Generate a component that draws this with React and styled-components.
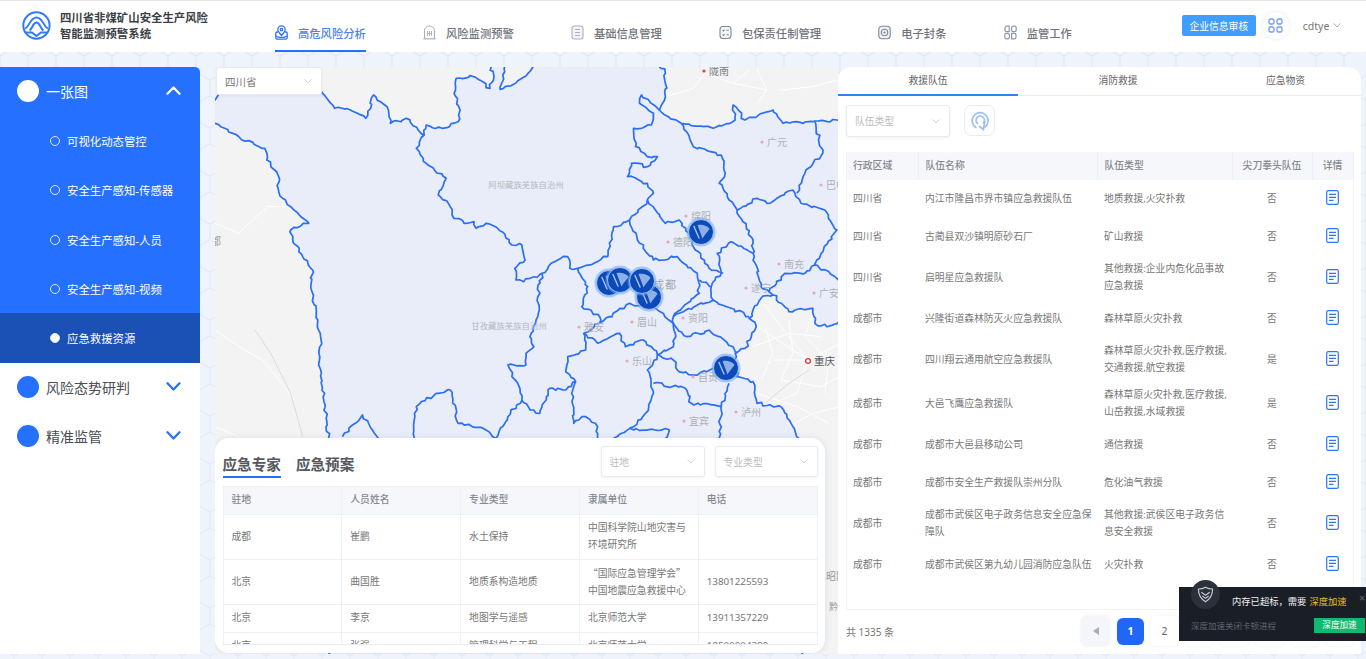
import React from "react"
import styled, { createGlobalStyle } from "styled-components"

const hexTile = encodeURIComponent(
  `<svg xmlns="http://www.w3.org/2000/svg" width="28" height="48"><path d="M14 0L28 8V24L14 32L0 24V8ZM14 32V48" fill="none" stroke="#dfe7f6" stroke-width="1"/></svg>`
)

const GlobalStyle = createGlobalStyle`
  * { box-sizing: border-box; }
  html, body { margin: 0; padding: 0; height: 100%; overflow: hidden; }
  body {
    font-family: "Noto Sans", "Noto Sans CJK SC", sans-serif;
    background-color: #eef3fc;
    background-image: url("data:image/svg+xml,${hexTile}");
  }
`

const Page = styled.div`
  width: 1366px;
  height: 659px;
  overflow: hidden;
`

/* ---------- header ---------- */
const Header = styled.header`
  height: 52px;
  background: #fff;
  border-top: 1px solid #e6e6e6;
  display: flex;
  padding-left: 22px;
`
const Brand = styled.div`
  display: flex;
  align-items: center;
  gap: 9px;
  width: 186px;
  padding-bottom: 2px;
`
const BrandTitle = styled.div`
  font-size: 11.4px;
  line-height: 16px;
  font-weight: 700;
  color: #3c3f45;
  white-space: nowrap;
`
const Nav = styled.nav`
  display: flex;
  gap: 57.2px;
  margin-left: 67px;
`
const NavItem = styled.div`
  display: flex;
  align-items: center;
  gap: 10px;
  height: 51px;
  padding-top: 14px;
  font-size: 11.3px;
  font-weight: 500;
  white-space: nowrap;
  color: ${({ $active }) => ($active ? "#4c7ff0" : "#6f747c")};
  border-bottom: 2px solid ${({ $active }) => ($active ? "#2570ff" : "transparent")};
`
const HeaderRight = styled.div`
  position: relative;
  display: flex;
  align-items: center;
  margin-left: 110px;
  padding-bottom: 2px;
`
const AuditButton = styled.button`
  width: 74px;
  height: 21px;
  padding: 0;
  border: 0;
  border-radius: 2px;
  background: #409eff;
  color: #fff;
  font: inherit;
  font-size: 9.8px;
`
const GridBadge = styled.div`
  width: 26px;
  height: 27px;
  margin-left: 7px;
  border-radius: 50%;
  background: #fff;
  box-shadow: 0 0 4px #e4e9f4;
  display: flex;
  align-items: center;
  justify-content: center;
`
const UserName = styled.span`
  margin-left: 14px;
  font-size: 10.5px;
  color: #777;
  display: flex;
  align-items: center;
  gap: 4px;
`

/* ---------- layout ---------- */
const Main = styled.main`
  display: grid;
  grid-template-columns: 200px 623px 523px;
  column-gap: 15px;
  height: 587px;
  margin-top: 15px;
  & > :nth-child(3) { margin-left: -15px; width: 523px; }
`

/* ---------- sidebar ---------- */
const Sidebar = styled.aside`
  background: #fff;
  border-top-right-radius: 5px;
  overflow: hidden;
`
const BlueGroup = styled.div`
  background: #2570ff;
`
const MenuHead = styled.div`
  height: 49.3px;
  display: flex;
  align-items: center;
  padding: 0 19px 1.5px 17px;
  font-size: 14px;
  color: ${({ $open }) => ($open ? "#fff" : "#4a4d52")};
`
const MenuDot = styled.span`
  width: 22px;
  height: 22px;
  border-radius: 50%;
  background: ${({ $open }) => ($open ? "#fff" : "#2570ff")};
  margin-right: 7px;
`
const MenuLabel = styled.span`
  flex: 1;
`
const SubItem = styled.div`
  height: 49.3px;
  display: flex;
  align-items: center;
  padding-left: 50px;
  font-size: 11.4px;
  color: #fff;
  background: ${({ $active }) => ($active ? "#1b50b4" : "transparent")};
`
const SubDot = styled.span`
  width: 10px;
  height: 10px;
  margin-right: 7px;
  border-radius: 50%;
  border: 1px solid #dfe9ff;
  background: ${({ $active }) => ($active ? "#fff" : "transparent")};
`

/* ---------- map ---------- */
const MapPane = styled.section`
  position: relative;
  background: #f3f3f3;
  overflow: hidden;
`
const MapSvg = styled.svg`
  display: block;
  width: 623px;
  height: 587px;
`
const Select = styled.div`
  display: flex;
  align-items: center;
  justify-content: space-between;
  width: ${({ $w }) => $w}px;
  height: ${({ $h }) => $h}px;
  padding: 0 9px 0 8px;
  background: #fff;
  border: 1px solid #e8ebf2;
  border-radius: 3px;
  box-shadow: 0 1px 3px rgba(60, 80, 130, 0.08);
  font-size: ${({ $dark }) => ($dark ? "10.5px" : "9.8px")};
  color: ${({ $dark }) => ($dark ? "#777" : "#bdbdbd")};
`
const MapSelectSlot = styled.div`
  position: absolute;
  left: 1px;
  top: 0;
`
const ExpertCard = styled.div`
  position: absolute;
  left: 0;
  top: 371px;
  width: 610px;
  height: 215px;
  padding: 8px 7.5px 0;
  background: #fff;
  border-radius: 14px;
  box-shadow: 0 0 6px rgba(60, 80, 130, 0.12);
`
const CardTop = styled.div`
  display: flex;
  justify-content: space-between;
  height: 40px;
`
const CardTabs = styled.div`
  display: flex;
  gap: 15px;
  padding-top: 7px;
`
const CardTab = styled.div`
  height: 25px;
  font-size: 14.6px;
  line-height: 22px;
  font-weight: 700;
  color: #55585e;
  border-bottom: ${({ $active }) => ($active ? "2.5px solid #2570ff" : "0")};
`
const CardSelects = styled.div`
  display: flex;
  gap: 10px;
`
const ExpertScroll = styled.div`
  height: 159px;
  overflow: hidden;
  border-bottom: 1px solid #e9ecf3;
`
const Table = styled.table`
  width: 100%;
  table-layout: fixed;
  border-collapse: collapse;
  font-size: 9.8px;
  line-height: 16.6px;
  color: #777;
`
const Th = styled.th`
  height: ${({ $h }) => $h}px;
  padding: 0 ${({ $pad }) => $pad}px;
  background: #f5f7fb;
  font-weight: 500;
  color: #85888e;
  white-space: nowrap;
  text-align: ${({ $center }) => ($center ? "center" : "left")};
  border: ${({ $lined }) => ($lined ? "1px solid #edf0f6" : "0")};
  border-right: 1px solid #edf0f6;
`
const Td = styled.td`
  height: ${({ $h }) => $h}px;
  padding: 0 ${({ $pad }) => $pad}px;
  text-align: ${({ $center }) => ($center ? "center" : "left")};
  white-space: pre;
  border: ${({ $lined }) => ($lined ? "1px solid #edf0f6" : "0")};
`
const CjkText = styled.span`
  font-family: "Noto Sans CJK SC", sans-serif;
`

/* ---------- right panel ---------- */
const TeamPanel = styled.section`
  background: #fff;
  border-radius: 13px 13px 0 0;
  height: 587px;
  padding: 0 7px 0 8px;
  position: relative;
`
const Tabs = styled.div`
  display: grid;
  grid-template-columns: 180px 200px 135px;
  margin: 0 -7px 0 -8px;
  border-bottom: 1px solid #e9edf5;
  height: 29px;
`
const Tab = styled.div`
  text-align: center;
  font-size: 9.8px;
  line-height: 28px;
  color: #666;
  height: 29px;
  border-bottom: ${({ $active }) => ($active ? "2px solid #2f83f5" : "0")};
`
const Filters = styled.div`
  display: flex;
  gap: 14px;
  margin: 9px 0 15px;
`
const IconButton = styled.button`
  width: 31px;
  height: 31px;
  padding: 0;
  border: 1px solid #e8ebf2;
  border-radius: 7px;
  background: #fff;
  display: flex;
  align-items: center;
  justify-content: center;
`
const TeamBox = styled.div`
  width: 508px;
  height: 458px;
  border: 1px solid #f1f3f8;
  border-top: 0;
`
const DetailIcon = styled.svg`
  display: block;
  margin: 0 auto 4px;
`
const Footer = styled.div`
  display: flex;
  align-items: center;
  margin-top: 6px;
  font-size: 10px;
  color: #777;
`
const Total = styled.span`
  flex: none;
  width: 235px;
  white-space: nowrap;
`
const Pager = styled.div`
  display: flex;
  align-items: center;
  gap: 6px;
`
const PageBtn = styled.div`
  flex: none;
  width: ${({ $active }) => ($active ? 27 : 29)}px;
  height: ${({ $active }) => ($active ? 27 : 30)}px;
  margin-left: ${({ $active }) => ($active ? 1 : 0)}px;
  border-radius: 6px;
  display: flex;
  align-items: center;
  justify-content: center;
  font-size: 10.5px;
  font-weight: ${({ $active }) => ($active ? 700 : 400)};
  color: ${({ $active }) => ($active ? "#fff" : "#666")};
  background: ${({ $active, $muted }) => ($active ? "#2167f5" : $muted ? "#f4f6fa" : "#fff")};
  box-shadow: 0 0 3px rgba(60, 80, 130, 0.1);
`
const PrevArrow = styled.span`
  width: 0;
  height: 0;
  border-style: solid;
  border-width: 4.5px 6px 4.5px 0;
  border-color: transparent #a9adb5 transparent transparent;
`

/* ---------- toast ---------- */
const Toast = styled.div`
  position: fixed;
  left: 1179px;
  top: 587px;
  width: 187px;
  height: 54px;
  background: #1a1e27;
  font-size: 9.3px;
`
const ToastBadge = styled.div`
  position: absolute;
  left: 12px;
  top: -7px;
  width: 29px;
  height: 29px;
  border-radius: 50%;
  background: #2b303b;
  display: flex;
  align-items: center;
  justify-content: center;
`
const ToastTitle = styled.div`
  position: absolute;
  left: 53px;
  top: 7px;
  color: #f0f0f0;
  white-space: nowrap;
`
const ToastLink = styled.span`
  color: #e8c21e;
  margin-left: 3px;
`
const ToastNote = styled.div`
  position: absolute;
  left: 12px;
  top: 32px;
  font-size: 8.5px;
  color: #5f6570;
  white-space: nowrap;
`
const ToastAction = styled.div`
  position: absolute;
  left: 135px;
  top: 31px;
  width: 51px;
  height: 15px;
  background: #0fb96f;
  color: #fff;
  font-size: 8.6px;
  line-height: 15px;
  text-align: center;
`
const ToastClose = styled.span`
  position: absolute;
  left: 180px;
  top: 3px;
  color: #666b75;
  font-size: 11px;
`

/* ---------- data ---------- */
const expertRows = [
  { h: 45, c: ["成都", "崔鹏", "水土保持", "中国科学院山地灾害与\n环境研究所", ""] },
  { h: 45, c: ["北京", "曲国胜", "地质系构造地质", <><CjkText>“国际应急管理学会”</CjkText>{"\n"}中国地震应急救援中心</>, "13801225593"] },
  { h: 28, c: ["北京", "李京", "地图学与遥感", "北京师范大学", "13911357229"] },
  { h: 28, c: ["北京", "张强", "管理科学与工程", "北京师范大学", "18500004399"] },
]

const teamRows = [
  { h: 38, c: ["四川省", "内江市隆昌市界市镇应急救援队伍", "地质救援,火灾扑救", "否"] },
  { h: 38, c: ["四川省", "古蔺县双沙镇明原砂石厂", "矿山救援", "否"] },
  { h: 44, c: ["四川省", "启明星应急救援队", "其他救援:企业内危化品事故\n应急救援", "否"] },
  { h: 38, c: ["成都市", "兴隆街道森林防灭火应急救援队", "森林草原火灾扑救", "否"] },
  { h: 44, c: ["成都市", "四川翔云通用航空应急救援队", "森林草原火灾扑救,医疗救援,\n交通救援,航空救援", "是"] },
  { h: 44, c: ["成都市", "大邑飞鹰应急救援队", "森林草原火灾扑救,医疗救援,\n山岳救援,水域救援", "是"] },
  { h: 38, c: ["成都市", "成都市大邑县移动公司", "通信救援", "否"] },
  { h: 38, c: ["成都市", "成都市安全生产救援队崇州分队", "危化油气救援", "否"] },
  { h: 44, c: ["成都市", "成都市武侯区电子政务信息安全应急保\n障队", "其他救援:武侯区电子政务信\n息安全救援", "否"] },
  { h: 38, c: ["成都市", "成都市武侯区第九幼儿园消防应急队伍", "火灾扑救", "否"] },
]

const subMenu = ["可视化动态管控", "安全生产感知-传感器", "安全生产感知-人员", "安全生产感知-视频", "应急救援资源"]

/* ---------- map geometry: points taken off the picture, x/y in a 2.509 x 3 grid ---------- */
const OUTLINE = [
  [285, 1800], [285, 1135], [262, 900], [265, 830], [258, 780], [240, 680], [245, 630], [220, 590], [195, 540], [190, 510], [215, 498], [235, 490],
  [190, 440], [160, 395], [158, 345], [130, 300], [125, 265], [60, 230], [0, 190], [-20, 175], [-20, 125], [0, 120], [8, 105], [15, 85], [262, 85], [270, 100],
  [300, 145], [340, 150], [378, 175], [398, 105], [435, 150], [440, 190], [480, 175], [525, 225], [530, 195], [570, 205], [610, 185], [615, 150],
  [600, 100], [605, 55], [650, 50], [690, 85], [700, 50], [688, 5], [728, 5], [722, 45], [715, 88], [770, 55], [808, 5], [1110, 5], [1130, 40],
  [1130, 110], [1115, 150], [1170, 190], [1250, 205], [1305, 180], [1300, 135], [1330, 180], [1400, 150], [1425, 190], [1500, 185], [1560, 180],
  [1620, 180], [1620, 760], [1535, 800], [1505, 790], [1500, 745], [1440, 755], [1400, 705], [1370, 715], [1340, 775], [1358, 800], [1330, 865],
  [1305, 880], [1310, 950], [1350, 965], [1360, 1030], [1420, 1040], [1450, 1100], [1465, 1135], [1470, 1800],
]

const BORDERS = [
  [[525, 225], [505, 265], [530, 310], [580, 355], [560, 405], [590, 440], [595, 465], [625, 490], [650, 485], [655, 505], [680, 490], [720, 515], [745, 555], [770, 555], [778, 600], [752, 625], [755, 660], [775, 665], [820, 640], [860, 600], [885, 590], [890, 625], [910, 625], [985, 590], [1000, 500], [1040, 480], [1085, 420], [1100, 400], [1085, 370], [1035, 350], [1045, 310], [1085, 320], [1110, 290], [1085, 290], [1055, 260], [1050, 205], [1095, 195], [1100, 160], [1065, 130], [1070, 105], [1115, 150]],
  [[820, 640], [810, 710], [810, 770], [790, 830], [800, 860], [780, 880], [780, 915], [735, 915], [745, 950], [765, 985], [770, 1020], [790, 1050], [815, 1060], [840, 985], [880, 990], [905, 965]],
  [[770, 1020], [735, 1070], [705, 1135]],
  [[500, 1135], [505, 1040], [555, 1000], [590, 990], [610, 1090], [680, 1110], [705, 1135]],
  [[320, 1130], [345, 1095], [370, 1065], [400, 1120], [410, 1140]],
  [[910, 625], [935, 680], [920, 740], [965, 770], [965, 790], [925, 820], [930, 870], [885, 890], [880, 935], [905, 965], [895, 1000], [900, 1090], [930, 1070], [960, 1100], [960, 1135]],
  [[965, 790], [1040, 730], [1100, 740], [1150, 790], [1155, 820], [1150, 860], [1110, 885]],
  [[925, 820], [960, 850], [1015, 820], [1030, 860], [1075, 840], [1110, 885], [1150, 900], [1160, 930], [1200, 945], [1250, 925], [1310, 950]],
  [[1110, 885], [1085, 930], [1100, 1000], [1080, 1060], [1050, 1100], [1000, 1135]],
  [[1100, 970], [1180, 985], [1195, 1030], [1270, 1040], [1290, 970]],
  [[1270, 1040], [1265, 1135]],
  [[1040, 1105], [1140, 1110], [1130, 1135]],
  [[1040, 480], [1060, 540], [1100, 600], [1160, 590], [1210, 640], [1215, 700], [1150, 770], [1150, 790], [1185, 830], [1240, 810], [1300, 860], [1310, 880]],
  [[1150, 770], [1210, 735], [1250, 720], [1340, 770]],
  [[1215, 660], [1245, 680], [1270, 640], [1260, 580], [1295, 545], [1350, 580], [1370, 680], [1390, 695], [1430, 640], [1480, 640], [1505, 615], [1560, 655], [1575, 680]],
  [[1245, 680], [1250, 720]],
  [[1085, 420], [1130, 490], [1165, 480], [1190, 520], [1205, 570], [1240, 625], [1275, 640]],
  [[1170, 190], [1200, 260], [1270, 285], [1280, 340], [1265, 370], [1290, 420], [1310, 450], [1350, 540], [1350, 580]],
  [[1310, 450], [1360, 415], [1385, 430], [1450, 390], [1470, 430], [1530, 450], [1560, 510], [1510, 600], [1505, 615]],
  [[1505, 185], [1525, 280], [1480, 340], [1460, 400]],
  [[1390, 695], [1400, 705]],
]

const ROADS = [
  [[1230, 40], [1200, 85], [1130, 110]], [[1230, 40], [1300, 70], [1340, 30]], [[1300, 70], [1385, 90], [1360, 130]], [[1360, 30], [1385, 90]],
  [[1420, 90], [1500, 80], [1560, 60]], [[1370, 720], [1420, 800], [1488, 900]], [[1360, 800], [1488, 900], [1568, 850]], [[1400, 900], [1488, 900]],
  [[1488, 900], [1460, 1000], [1400, 1030]], [[1350, 860], [1440, 820], [1520, 830]], [[1420, 960], [1520, 980], [1568, 950]], [[1440, 780], [1450, 880], [1420, 960]],
  [[1380, 800], [1400, 880], [1370, 960]], [[1500, 760], [1480, 830], [1540, 900], [1530, 1000]], [[1360, 1000], [1460, 1040], [1540, 1090]], [[1440, 1100], [1500, 1060], [1568, 1040]],
  [[0, 490], [60, 520], [130, 440], [190, 440]], [[0, 810], [60, 860], [120, 900], [200, 1020]], [[0, 1100], [60, 1130]],
]
const RIVERS = [[[100, 810], [140, 880], [190, 1000], [220, 1130]], [[1380, 1030], [1440, 970], [1490, 930]]]

const toPage = ([x, y]) => [215 + x / 2.509, 60 + y / 3]

// small seeded jitter so that province borders look hand-surveyed, not ruled
let seed = 17
const rnd = () => {
  seed = (seed * 16807) % 2147483647
  return seed / 2147483647 - 0.5
}
const wiggle = (pts) => {
  const page = pts.map(toPage)
  const out = [page[0]]
  for (let i = 1; i < page.length; i++) {
    const [x0, y0] = page[i - 1]
    const [x1, y1] = page[i]
    const steps = Math.max(1, Math.round(Math.hypot(x1 - x0, y1 - y0) / 3.5))
    for (let s = 1; s <= steps; s++) {
      const t = s / steps
      const j = s === steps ? 0 : 3.2
      out.push([x0 + (x1 - x0) * t + rnd() * j, y0 + (y1 - y0) * t + rnd() * j])
    }
  }
  return out.map((p) => p.map((n) => n.toFixed(1)).join(" ")).join(" L")
}
const plain = (pts) => pts.map(toPage).map((p) => p.join(" ")).join(" L")
const outlinePath = "M" + wiggle(OUTLINE) + "Z"
const borderPaths = BORDERS.map((b) => "M" + wiggle(b))

const CITIES = [
  { x: 704, y: 71, t: "陇南", c: "#77797d", dot: "#e0405a", size: 10 },
  { x: 762, y: 142, t: "广元" },
  { x: 821, y: 185, t: "巴中" },
  { x: 686, y: 216, t: "绵阳" },
  { x: 668, y: 242, t: "德阳" },
  { x: 779, y: 264, t: "南充" },
  { x: 746, y: 288, t: "遂宁" },
  { x: 814, y: 293, t: "广安" },
  { x: 683, y: 318, t: "资阳" },
  { x: 632, y: 322, t: "眉山" },
  { x: 579, y: 327, t: "雅安" },
  { x: 627, y: 361, t: "乐山" },
  { x: 693, y: 377, t: "自贡" },
  { x: 736, y: 412, t: "泸州" },
  { x: 684, y: 421, t: "宜宾" },
]
const AREAS = [
  { x: 526, y: 188, t: "阿坝藏族羌族自治州" },
  { x: 509, y: 329, t: "甘孜藏族羌族自治州" },
]
const MARKERS = [[609, 283], [620, 280], [649, 297], [642, 281], [701, 232], [726, 368]]

const Marker = ({ x, y }) => (
  <g transform={`translate(${x} ${y})`}>
    <circle r="14.5" fill="#6aa5f5" opacity="0.55" />
    <circle r="12.5" fill="#0b4ab8" stroke="#b9d2f7" strokeWidth="0.8" />
    <path d="M-3.5 -7C1 -8 7 -6 8.5 -3C6 0.5 3 3.5 1.5 6.5Z" fill="#8fb0e6" />
    <path d="M-7 -5.5L-2 6" stroke="#a9c4f0" strokeWidth="1.4" strokeLinecap="round" />
  </g>
)

/* ---------- small icons ---------- */
const Chevron = ({ size = 10, color = "#c4c7cd", up, width = 1 }) => (
  <svg width={size} height={size * 0.6} viewBox="0 0 10 6" fill="none">
    <path d={up ? "M1 5.2L5 1L9 5.2" : "M1 .8L5 5L9 .8"} stroke={color} strokeWidth={width} strokeLinecap="round" strokeLinejoin="round" />
  </svg>
)

const Logo = () => (
  <svg width="29" height="29" viewBox="0 0 29 29" fill="none" stroke="#2e7df5" strokeWidth="2">
    <circle cx="14.5" cy="14.5" r="13.2" />
    <path d="M3 17.5C7 16.5 8 6.5 14.5 6.5C21 6.5 22 16.5 26 17.5" />
    <path d="M7.5 19.5C10.5 18.5 10.5 11.5 14.5 11.5C18.5 11.5 18.5 18.5 21.5 19.5" />
    <path d="M3.5 21.5H10L14.5 25L19 21.5H25.5" />
  </svg>
)

const navIcons = {
  risk: (
    <svg width="13" height="15" viewBox="0 0 13 15" fill="none" stroke="#2f74f5" strokeWidth="1.3">
      <path d="M3 7H2A1.2 1.2 0 0 0 .8 8.2V12.5A1.7 1.7 0 0 0 2.5 14.2H10.5A1.7 1.7 0 0 0 12.2 12.5V8.2A1.2 1.2 0 0 0 11 7H10" />
      <path d="M6.5 10.5C4.5 8.5 2.8 6.8 2.8 4.6A3.7 3.7 0 0 1 10.2 4.6C10.2 6.8 8.5 8.5 6.5 10.5Z" />
      <circle cx="6.5" cy="4.6" r="1.2" />
      <path d="M.8 11L4 12.3H9L12.2 11" />
    </svg>
  ),
  warn: (
    <svg width="13" height="15" viewBox="0 0 13 15" fill="none" stroke="#a9aeb8" strokeWidth="1">
      <path d="M1.5 13.5V5.5A5 4.5 0 0 1 11.5 5.5V13.5" />
      <path d="M.3 13.8H12.7" strokeWidth="1.2" />
      <path d="M4.5 6V11M6.5 6V11M8.5 6V11M3.8 8.5H9.2" strokeWidth=".9" />
    </svg>
  ),
  base: (
    <svg width="13" height="15" viewBox="0 0 13 15" fill="none" stroke="#a9b0c0" strokeWidth="1.1">
      <rect x="1" y="1" width="11" height="13" rx="2.5" fill="#f3f5f9" />
      <path d="M4 4.5H9M4 7.5H9M4 10.5H9" />
    </svg>
  ),
  duty: (
    <svg width="13" height="15" viewBox="0 0 13 15" fill="none" stroke="#7d889e" strokeWidth="1.1">
      <rect x="1" y="1.5" width="11" height="12" rx="3" fill="#f3f5f9" />
      <path d="M3.5 5.2L4.4 6L5.6 4.6M7.5 5.3H9.8M3.5 9.7L4.4 10.5L5.6 9.1M7.5 9.8H9.8" />
    </svg>
  ),
  seal: (
    <svg width="13" height="15" viewBox="0 0 13 15" fill="none" stroke="#7d889e" strokeWidth="1.1">
      <rect x=".8" y="1.2" width="11.4" height="12.6" rx="3" fill="#eef1f6" />
      <circle cx="6.5" cy="7.5" r="3.2" />
      <circle cx="6.5" cy="7.5" r="1.1" fill="#7d889e" stroke="none" />
    </svg>
  ),
  work: (
    <svg width="13" height="15" viewBox="0 0 13 15" fill="none" stroke="#8d97aa" strokeWidth="1.2">
      <path d="M5.2 6.6H2.6A1.6 1.6 0 0 1 1 5V2.8A1.6 1.6 0 0 1 2.6 1.2H5.2Z" />
      <rect x="7.6" y="1.2" width="4.6" height="5.4" rx="1.6" />
      <rect x=".8" y="8.4" width="4.6" height="5.4" rx="1.6" />
      <path d="M7.6 8.4H10.4A1.6 1.6 0 0 1 12 10V12.2A1.6 1.6 0 0 1 10.4 13.8H7.6Z" />
    </svg>
  ),
}

const GridIcon = () => (
  <svg width="15" height="15" viewBox="0 0 15 15" fill="none" stroke="#6c9cf5" strokeWidth="1.3">
    <rect x="1" y="1" width="5" height="5" rx="1.6" />
    <rect x="9" y="1" width="5" height="5" rx="1.6" />
    <rect x="1" y="9" width="5" height="5" rx="1.6" />
    <rect x="9" y="9" width="5" height="5" rx="1.6" />
  </svg>
)

const RefreshIcon = () => (
  <svg width="20" height="22" viewBox="0 0 20 22" fill="none" stroke="#9cc0f5" strokeWidth="1.7" strokeLinecap="round">
    <path d="M6 17.5A8 8 0 1 1 15 17" />
    <path d="M7.5 13.5A4.2 4.2 0 1 1 13.5 13" />
    <path d="M14.8 11.5L13.4 19.5L9.6 16.5" />
  </svg>
)

const DocIcon = () => (
  <DetailIcon width="13" height="15" viewBox="0 0 13 15" fill="none" stroke="#2f74f5" strokeWidth="1.2">
    <rect x=".7" y=".7" width="11.6" height="13.6" rx="1.6" />
    <path d="M3 4.3H10M3 7.3H10M3 10.3H7.5" />
  </DetailIcon>
)

const ShieldIcon = () => (
  <svg width="17" height="17" viewBox="0 0 17 17" fill="none" stroke="#c3c8d0" strokeWidth="1.2" strokeLinejoin="round">
    <path d="M8.5 1.2C11 2.8 13.5 3 15.6 3C15.6 8 13 13 8.5 15.8C4 13 1.4 8 1.4 3C3.5 3 6 2.8 8.5 1.2Z" />
    <path d="M4.3 6.2L8.5 9.2L12.7 6.2M5.4 10L8.5 12.4L11.6 10" />
  </svg>
)

const App = () => {
  const navItems = [
    ["risk", "高危风险分析", true],
    ["warn", "风险监测预警"],
    ["base", "基础信息管理"],
    ["duty", "包保责任制管理"],
    ["seal", "电子封条"],
    ["work", "监管工作"],
  ]

  return (
    <Page>
      <GlobalStyle />
      <Header>
        <Brand>
          <Logo />
          <BrandTitle>
            四川省非煤矿山安全生产风险
            <br />
            智能监测预警系统
          </BrandTitle>
        </Brand>
        <Nav>
          {navItems.map(([icon, label, active]) => (
            <NavItem key={label} $active={active}>
              {navIcons[icon]}
              {label}
            </NavItem>
          ))}
        </Nav>
        <HeaderRight>
          <AuditButton>企业信息审核</AuditButton>
          <GridBadge>
            <GridIcon />
          </GridBadge>
          <UserName>
            cdtye
            <Chevron size={8} color="#999" />
          </UserName>
        </HeaderRight>
      </Header>

      <Main>
        <Sidebar>
          <BlueGroup>
            <MenuHead $open>
              <MenuDot $open />
              <MenuLabel>一张图</MenuLabel>
              <Chevron size={15} color="#fff" up width={1.5} />
            </MenuHead>
            {subMenu.map((item, i) => (
              <SubItem key={item} $active={i === 4}>
                <SubDot $active={i === 4} />
                {item}
              </SubItem>
            ))}
          </BlueGroup>
          <MenuHead>
            <MenuDot />
            <MenuLabel>风险态势研判</MenuLabel>
            <Chevron size={15} color="#2570ff" width={1.5} />
          </MenuHead>
          <MenuHead>
            <MenuDot />
            <MenuLabel>精准监管</MenuLabel>
            <Chevron size={15} color="#2570ff" width={1.5} />
          </MenuHead>
        </Sidebar>

        <MapPane>
          <MapSvg viewBox="215 67 623 587" fontFamily='"Noto Sans CJK SC", sans-serif'>
            <path d={outlinePath} fill="#e8edf9" />
            {ROADS.map((r, i) => (
              <path key={i} d={"M" + plain(r)} fill="none" stroke="#fff" strokeWidth="1" />
            ))}
            {RIVERS.map((r, i) => (
              <path key={i} d={"M" + plain(r)} fill="none" stroke="#d5e0da" strokeWidth="1" />
            ))}
            <path d={outlinePath} fill="none" stroke="#2b6ef5" strokeWidth="1.7" strokeLinejoin="round" />
            {borderPaths.map((d, i) => (
              <path key={i} d={d} fill="none" stroke="#2b6ef5" strokeWidth="1.7" strokeLinejoin="round" />
            ))}
            {AREAS.map((a) => (
              <text key={a.t} x={a.x} y={a.y} textAnchor="middle" fontSize="8.4" fill="#b4b7be">
                {a.t}
              </text>
            ))}
            {CITIES.map((c) => (
              <g key={c.t}>
                <circle cx={c.x} cy={c.y} r="1.6" fill={c.dot || "#e4a9b4"} />
                <text x={c.x + 5} y={c.y + 3.6} fontSize={c.size || 10} fill={c.c || "#aeb0b6"}>
                  {c.t}
                </text>
              </g>
            ))}
            <text x="653" y="289" fontSize="11" fill="#a3a6ad" letterSpacing="1">成都</text>
            <text x="211" y="245" fontSize="10" fill="#999">都</text>
            <text x="826" y="580" fontSize="10" fill="#999">昭阳</text>
            <text x="829" y="610" fontSize="9" fill="#999">黔</text>
            <circle cx="808" cy="361" r="2.4" fill="#fff" stroke="#e2343f" strokeWidth="1.3" />
            <text x="814" y="364.6" fontSize="10.5" fill="#55585e">重庆</text>
            {MARKERS.map(([x, y]) => (
              <Marker key={x} x={x} y={y} />
            ))}
          </MapSvg>

          <MapSelectSlot>
            <Select $w={106} $h={28} $dark>
              四川省
              <Chevron size={8} />
            </Select>
          </MapSelectSlot>

          <ExpertCard>
            <CardTop>
              <CardTabs>
                <CardTab $active>应急专家</CardTab>
                <CardTab>应急预案</CardTab>
              </CardTabs>
              <CardSelects>
                <Select $w={104} $h={31}>
                  驻地
                  <Chevron size={8} />
                </Select>
                <Select $w={103} $h={31}>
                  专业类型
                  <Chevron size={8} />
                </Select>
              </CardSelects>
            </CardTop>
            <ExpertScroll>
              <Table>
                <thead>
                  <tr>
                    {["驻地", "人员姓名", "专业类型", "隶属单位", "电话"].map((t) => (
                      <Th key={t} $h={28} $pad={8} $lined>
                        {t}
                      </Th>
                    ))}
                  </tr>
                </thead>
                <tbody>
                  {expertRows.map((r) => (
                    <tr key={r.c[1]}>
                      {r.c.map((v, i) => (
                        <Td key={i} $h={r.h} $pad={8} $lined>
                          {v}
                        </Td>
                      ))}
                    </tr>
                  ))}
                </tbody>
              </Table>
            </ExpertScroll>
          </ExpertCard>
        </MapPane>

        <TeamPanel>
          <Tabs>
            <Tab $active>救援队伍</Tab>
            <Tab>消防救援</Tab>
            <Tab>应急物资</Tab>
          </Tabs>
          <Filters>
            <Select $w={104} $h={32}>
              队伍类型
              <Chevron size={8} />
            </Select>
            <IconButton>
              <RefreshIcon />
            </IconButton>
          </Filters>
          <TeamBox>
            <Table>
              <colgroup>
                <col width="71" />
                <col width="179" />
                <col width="135" />
                <col width="80" />
                <col width="41" />
              </colgroup>
              <thead>
                <tr>
                  <Th $h={28} $pad={6}>行政区域</Th>
                  <Th $h={28} $pad={7}>队伍名称</Th>
                  <Th $h={28} $pad={7}>队伍类型</Th>
                  <Th $h={28} $pad={0} $center>尖刀拳头队伍</Th>
                  <Th $h={28} $pad={0} $center>详情</Th>
                </tr>
              </thead>
              <tbody>
                {teamRows.map((r) => (
                  <tr key={r.c[1]}>
                    <Td $h={r.h} $pad={6}>{r.c[0]}</Td>
                    <Td $h={r.h} $pad={7}>{r.c[1]}</Td>
                    <Td $h={r.h} $pad={7}>{r.c[2]}</Td>
                    <Td $h={r.h} $pad={0} $center>{r.c[3]}</Td>
                    <Td $h={r.h} $pad={0}>
                      <DocIcon />
                    </Td>
                  </tr>
                ))}
              </tbody>
            </Table>
          </TeamBox>
          <Footer>
            <Total>共 1335 条</Total>
            <Pager>
              <PageBtn $muted>
                <PrevArrow />
              </PageBtn>
              <PageBtn $active>1</PageBtn>
              <PageBtn>2</PageBtn>
              {/* the rest of the pager sits under the toast */}
              <PageBtn />
              <PageBtn />
              <PageBtn />
              <PageBtn />
              <PageBtn />
            </Pager>
          </Footer>
        </TeamPanel>
      </Main>

      <Toast>
        <ToastBadge>
          <ShieldIcon />
        </ToastBadge>
        <ToastTitle>
          内存已超标，需要
          <ToastLink>深度加速</ToastLink>
        </ToastTitle>
        <ToastClose>×</ToastClose>
        <ToastNote>深度加速关闭卡顿进程</ToastNote>
        <ToastAction>深度加速</ToastAction>
      </Toast>
    </Page>
  )
}

export default App
